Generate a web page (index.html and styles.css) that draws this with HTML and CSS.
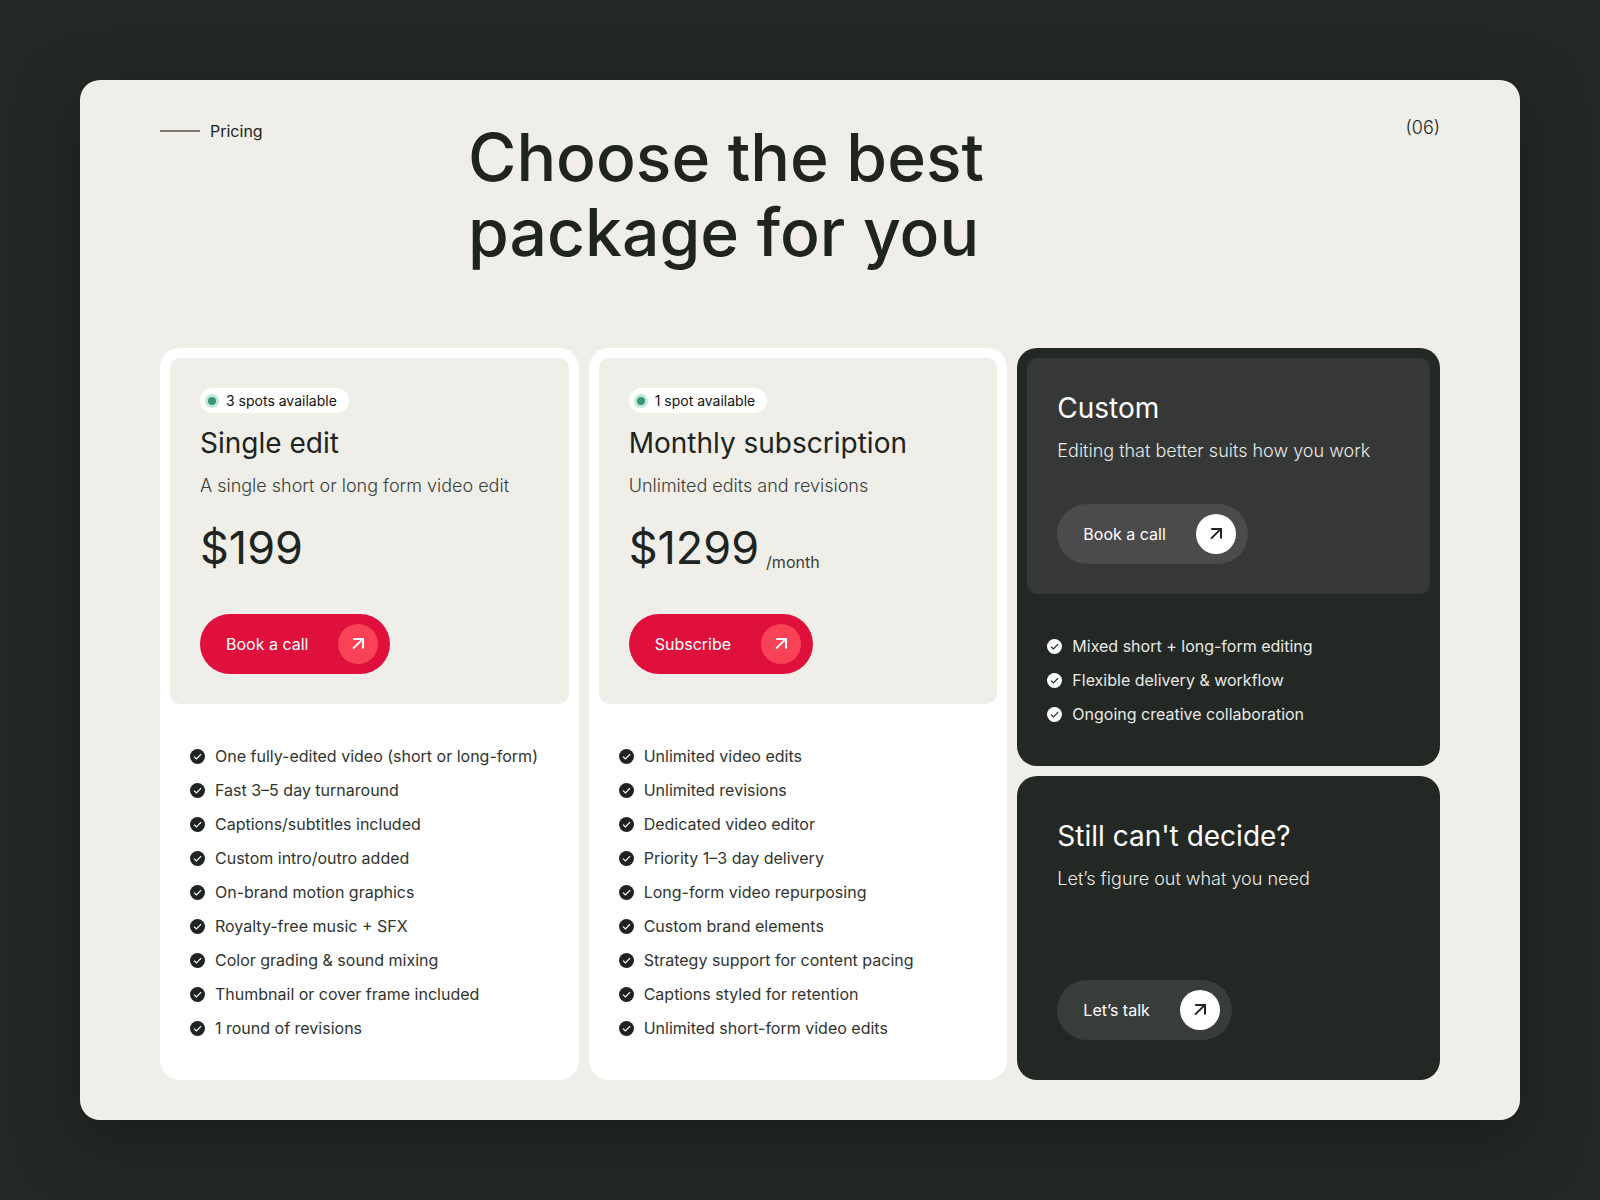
FILE: index.html
```html
<!DOCTYPE html>
<html lang="en">
<head>
  <meta charset="UTF-8">
  <meta name="viewport" content="width=device-width, initial-scale=1.0">
  <title>Pricing</title>
  <link rel="stylesheet" href="styles.css">
</head>
<body>

  <!-- shared icons -->
  <svg class="sprite" aria-hidden="true">
    <symbol id="check" viewBox="0 0 15 15">
      <circle class="check-bg" cx="7.5" cy="7.5" r="7.5"/>
      <path class="check-mark" d="M4 7.6l2.4 2.4 4.7-4.8"/>
    </symbol>
    <symbol id="arrow" viewBox="0 0 12 12">
      <path d="M1 10.6L10.4 1.4M1.2 1h9.8v9.6"/>
    </symbol>
  </svg>

  <main class="panel">
    <header class="header">
      <div class="label">Pricing</div>
      <h1>Choose the best<br>package for you</h1>
      <div class="number">(06)</div>
    </header>

    <section class="plans">
      <article class="card">
        <div class="card-top">
          <div class="badge"><span class="dot"></span>3 spots available</div>
          <h2>Single edit</h2>
          <p class="desc">A single short or long form video edit</p>
          <div class="price">$199</div>
          <button type="button" class="btn btn-red">Book a call<span class="circle"><svg class="arrow"><use href="#arrow"/></svg></span></button>
        </div>
        <ul class="features">
          <li><svg class="check"><use href="#check"/></svg>One fully-edited video (short or long-form)</li>
          <li><svg class="check"><use href="#check"/></svg>Fast 3–5 day turnaround</li>
          <li><svg class="check"><use href="#check"/></svg>Captions/subtitles included</li>
          <li><svg class="check"><use href="#check"/></svg>Custom intro/outro added</li>
          <li><svg class="check"><use href="#check"/></svg>On-brand motion graphics</li>
          <li><svg class="check"><use href="#check"/></svg>Royalty-free music + SFX</li>
          <li><svg class="check"><use href="#check"/></svg>Color grading &amp; sound mixing</li>
          <li><svg class="check"><use href="#check"/></svg>Thumbnail or cover frame included</li>
          <li><svg class="check"><use href="#check"/></svg>1 round of revisions</li>
        </ul>
      </article>

      <article class="card">
        <div class="card-top">
          <div class="badge"><span class="dot"></span>1 spot available</div>
          <h2>Monthly subscription</h2>
          <p class="desc">Unlimited edits and revisions</p>
          <div class="price">$1299<span class="period">/month</span></div>
          <button type="button" class="btn btn-red">Subscribe<span class="circle"><svg class="arrow"><use href="#arrow"/></svg></span></button>
        </div>
        <ul class="features">
          <li><svg class="check"><use href="#check"/></svg>Unlimited video edits</li>
          <li><svg class="check"><use href="#check"/></svg>Unlimited revisions</li>
          <li><svg class="check"><use href="#check"/></svg>Dedicated video editor</li>
          <li><svg class="check"><use href="#check"/></svg>Priority 1–3 day delivery</li>
          <li><svg class="check"><use href="#check"/></svg>Long-form video repurposing</li>
          <li><svg class="check"><use href="#check"/></svg>Custom brand elements</li>
          <li><svg class="check"><use href="#check"/></svg>Strategy support for content pacing</li>
          <li><svg class="check"><use href="#check"/></svg>Captions styled for retention</li>
          <li><svg class="check"><use href="#check"/></svg>Unlimited short-form video edits</li>
        </ul>
      </article>

      <div class="column">
        <article class="card dark">
          <div class="card-top">
            <h2>Custom</h2>
            <p class="desc">Editing that better suits how you work</p>
            <button type="button" class="btn btn-gray">Book a call<span class="circle"><svg class="arrow"><use href="#arrow"/></svg></span></button>
          </div>
          <ul class="features">
            <li><svg class="check"><use href="#check"/></svg>Mixed short + long-form editing</li>
            <li><svg class="check"><use href="#check"/></svg>Flexible delivery &amp; workflow</li>
            <li><svg class="check"><use href="#check"/></svg>Ongoing creative collaboration</li>
          </ul>
        </article>

        <article class="card dark help">
          <h2>Still can't decide?</h2>
          <p class="desc">Let’s figure out what you need</p>
          <button type="button" class="btn btn-green">Let’s talk<span class="circle"><svg class="arrow"><use href="#arrow"/></svg></span></button>
        </article>
      </div>
    </section>
  </main>

</body>
</html>
```

FILE: styles.css
```css
* {
  box-sizing: border-box;
}
body {
  margin: 0;
  padding: 80px;
  font-family: Inter, "Liberation Sans", sans-serif;
  font-size: 16px;
  line-height: 24px;
  color: #202420;
  background-color: #242825;
}
h1, h2, p, ul {
  margin: 0;
  padding: 0;
  font-weight: 400;
}
.sprite {
  display: none;
}
.panel {
  padding: 40px 80px;
  background-color: #efeee9;
  border-radius: 20px;
  box-shadow: 0 20px 60px rgba(20, 24, 21, 0.6);
}

/* header */
.header {
  display: grid;
  grid-template-columns: 308px 1fr auto;
  align-items: start;
  margin-bottom: 78px;
}
.label {
  display: flex;
  align-items: center;
  gap: 10px;
  line-height: 22px;
}
.label::before {
  content: "";
  width: 40px;
  height: 2px;
  background-color: #7c7a70;
}
h1 {
  font-size: 66px;
  line-height: 75px;
  font-weight: 500;
}
.number {
  font-size: 18px;
  line-height: 16px;
  font-weight: 300;
}

/* plans */
.plans {
  display: grid;
  grid-template-columns: 419fr 419fr 423fr;
  gap: 10px;
}
.column {
  display: flex;
  flex-direction: column;
  gap: 10px;
}
.card {
  padding: 10px;
  background-color: #fff;
  border-radius: 20px;
}
.card-top {
  display: flex;
  flex-direction: column;
  align-items: flex-start;
  padding: 30px;
  background-color: #efeee9;
  border-radius: 10px;
}
.badge {
  display: flex;
  align-items: center;
  margin-bottom: 10px;
  padding: 0 12px 0 5px;
  font-size: 14px;
  line-height: 25px;
  color: #111;
  background-color: #fff;
  border-radius: 13px;
}
.dot {
  width: 14px;
  height: 14px;
  margin-right: 7px;
  background-color: #379777;
  border: 3px solid #c0e9d9;
  border-radius: 50%;
}
h2 {
  font-size: 28px;
  line-height: 40px;
}
.desc {
  margin-top: 10px;
  font-size: 18px;
  line-height: 26px;
  font-weight: 300;
  color: #3a3e3a;
}
.price {
  display: flex;
  align-items: flex-end;
  gap: 7px;
  margin-top: 23px;
  font-size: 45px;
  line-height: 52px;
}
.period {
  font-size: 16px;
  line-height: 24px;
  color: #3a3e3a;
}
.btn {
  display: flex;
  align-items: center;
  gap: 30px;
  height: 60px;
  margin-top: 40px;
  padding: 0 12px 0 26px;
  font-family: inherit;
  font-size: 16px;
  color: #fff;
  border: none;
  border-radius: 30px;
  cursor: pointer;
}
.btn-red {
  background-color: #df103b;
}
.btn-gray {
  background-color: #4b4b4b;
}
.btn-green {
  background-color: #393d3a;
}
.circle {
  display: flex;
  align-items: center;
  justify-content: center;
  width: 40px;
  height: 40px;
  color: #202420;
  background-color: #fff;
  border-radius: 50%;
}
.btn-red .circle {
  color: #fff;
  background-color: #f94256;
}
.arrow {
  width: 12px;
  height: 12px;
  fill: none;
  stroke: currentColor;
  stroke-width: 2;
}

/* feature lists */
.features {
  display: flex;
  flex-direction: column;
  gap: 10px;
  padding: 40px 20px 30px;
  list-style: none;
  color: #303430;
}
.features li {
  display: flex;
  align-items: center;
  gap: 10px;
}
.check {
  flex: none;
  width: 15px;
  height: 15px;
  color: #202420;
  stroke: #fff;
}
.check-bg {
  fill: currentColor;
  stroke: none;
}
.check-mark {
  fill: none;
  stroke-width: 1.2;
}

/* dark cards */
.dark {
  color: #fff;
  background-color: #242825;
}
.dark .card-top {
  background-color: #363837;
}
.dark .desc,
.dark .features {
  color: #e8eae7;
}
.dark .check {
  color: #fff;
  stroke: #202420;
}
.help {
  flex: 1;
  display: flex;
  flex-direction: column;
  align-items: flex-start;
  padding: 40px;
}
.help .btn {
  margin-top: auto;
}
```
